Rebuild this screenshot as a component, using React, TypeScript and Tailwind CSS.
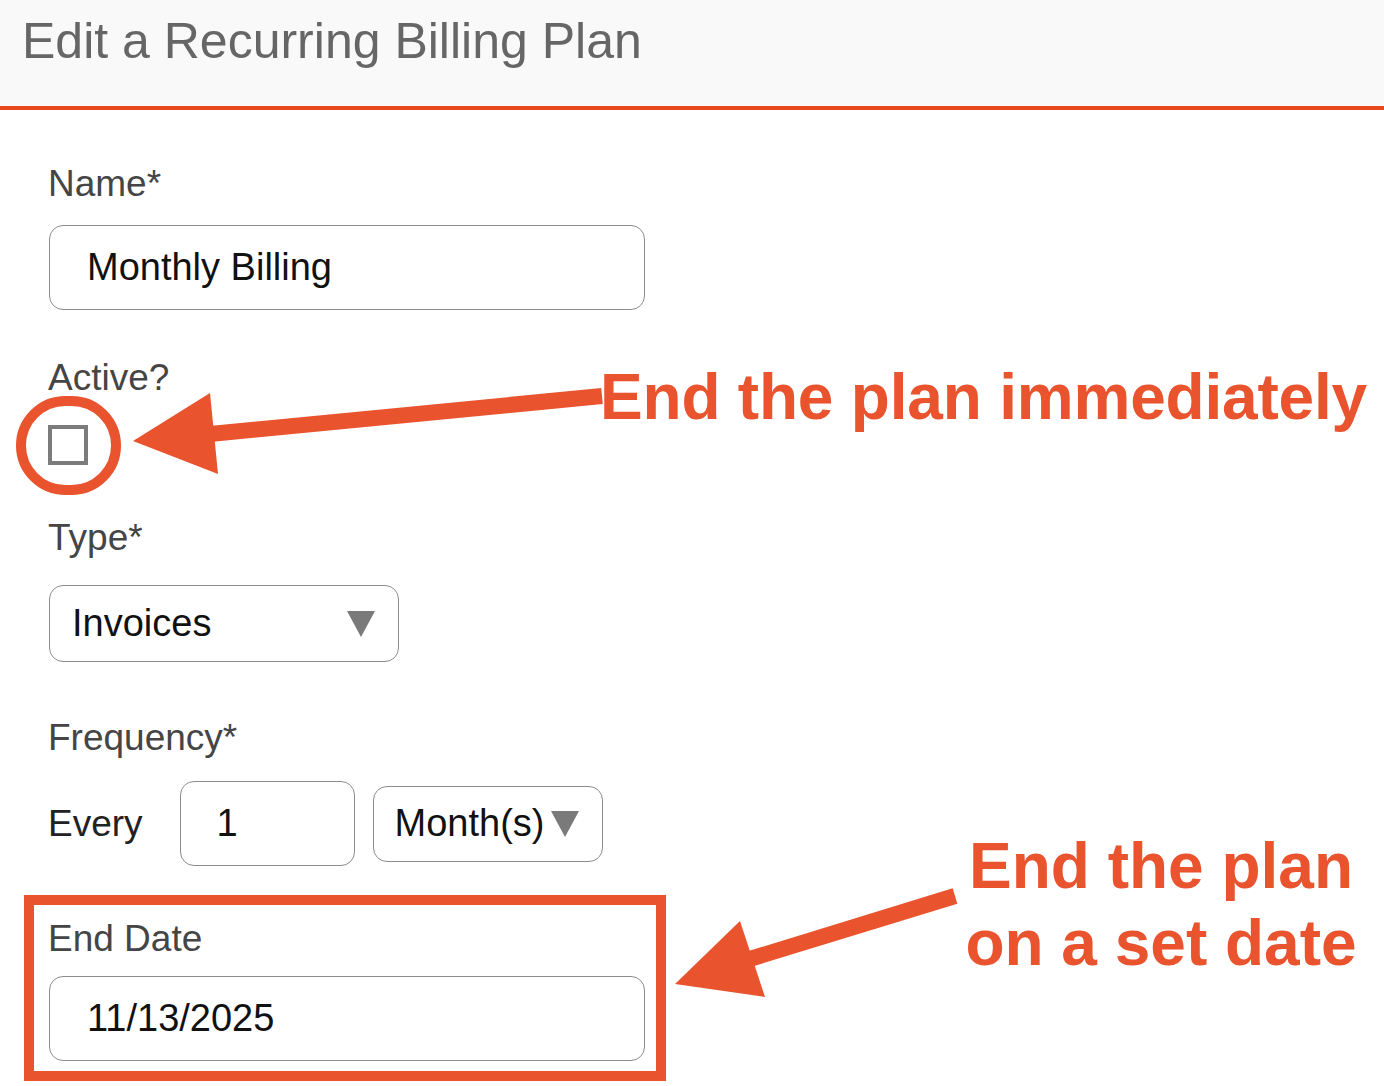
import React from 'react'

const label = "text-[37px] leading-[37px] text-[#454545]"
const field = "flex items-center border-[1.5px] border-[#8c8c8c] rounded-[14px] bg-white text-[38px] text-[#111]"

function Caret() {
  return (
    <svg width="28" height="26" viewBox="0 0 28 26" className="shrink-0">
      <polygon points="0,0 28,0 14,26" fill="#7a7a7a" />
    </svg>
  )
}

export default function App() {
  return (
    <div
      className="relative w-[1384px] h-[1086px] bg-white overflow-hidden"
      style={{ fontFamily: '"Liberation Sans", Arial, sans-serif' }}
    >
      {/* header */}
      <div className="h-[110px] bg-[#f9f9f9] border-b-4 border-[#e8481c] pl-[22px] pt-[16px]">
        <h1 className="text-[50px] leading-[50px] text-[#666]">Edit a Recurring Billing Plan</h1>
      </div>

      {/* form */}
      <div className="flex flex-col items-start pl-[49px]">
        <div className={`${label} -ml-px mt-[55px]`}>Name*</div>
        <div className={`${field} mt-[23px] w-[596px] h-[85px] pl-[37px]`}>Monthly Billing</div>

        <div className={`${label} -ml-px mt-[49px]`}>Active?</div>
        <div className="-ml-px mt-[29px] w-[40px] h-[40px] border-[4px] border-[#7c7c7c] bg-white" />

        <div className={`${label} -ml-px mt-[54px]`}>Type*</div>
        <div className={`${field} mt-[29px] w-[350px] h-[77px] pl-[22px] pr-[23px] justify-between text-[37px]`}>
          <span>Invoices</span>
          <Caret />
        </div>

        <div className={`${label} -ml-px mt-[57px]`}>Frequency*</div>
        <div className="-ml-px mt-[25px] flex items-center h-[85px]">
          <span className="text-[37px] text-[#222]">Every</span>
          <div className={`${field} ml-[37px] w-[175px] h-[85px] pl-[36px]`}>1</div>
          <div className={`${field} ml-[18px] w-[230px] h-[76px] pl-[21px] pr-[23px] justify-between text-[37px]`}>
            <span>Month(s)</span>
            <Caret />
          </div>
        </div>

        {/* end date, boxed */}
        <div className="mt-[29px] -ml-[25px] w-[642px] border-[10px] border-[#e9532e] pl-[15px] pr-[11px] pt-[15px] pb-[10px]">
          <div className={`${label} -ml-px`}>End Date</div>
          <div className={`${field} mt-[19px] w-[596px] h-[85px] pl-[37px]`}>11/13/2025</div>
        </div>
      </div>

      {/* annotations */}
      <div className="absolute left-[16px] top-[396px] w-[105px] h-[99px] rounded-full border-[10px] border-[#e9532e]" />

      <svg className="absolute inset-0 pointer-events-none" width="1384" height="1086">
        <line x1="602" y1="396" x2="200" y2="435" stroke="#e9532e" strokeWidth="16" />
        <polygon points="133,441 210,393 218,474" fill="#e9532e" />
        <line x1="955" y1="896" x2="740" y2="962" stroke="#e9532e" strokeWidth="16" />
        <polygon points="675,984 740,921 765,997" fill="#e9532e" />
      </svg>

      <div className="absolute left-[600px] top-[365px] text-[64px] leading-[64px] font-bold tracking-[-0.2px] text-[#e9532e] whitespace-nowrap">
        End the plan immediately
      </div>
      <div className="absolute left-[960px] top-[828px] w-[402px] text-center text-[64px] leading-[77px] font-bold text-[#e9532e]">
        End the plan
        <br />
        on a set date
      </div>
    </div>
  )
}
